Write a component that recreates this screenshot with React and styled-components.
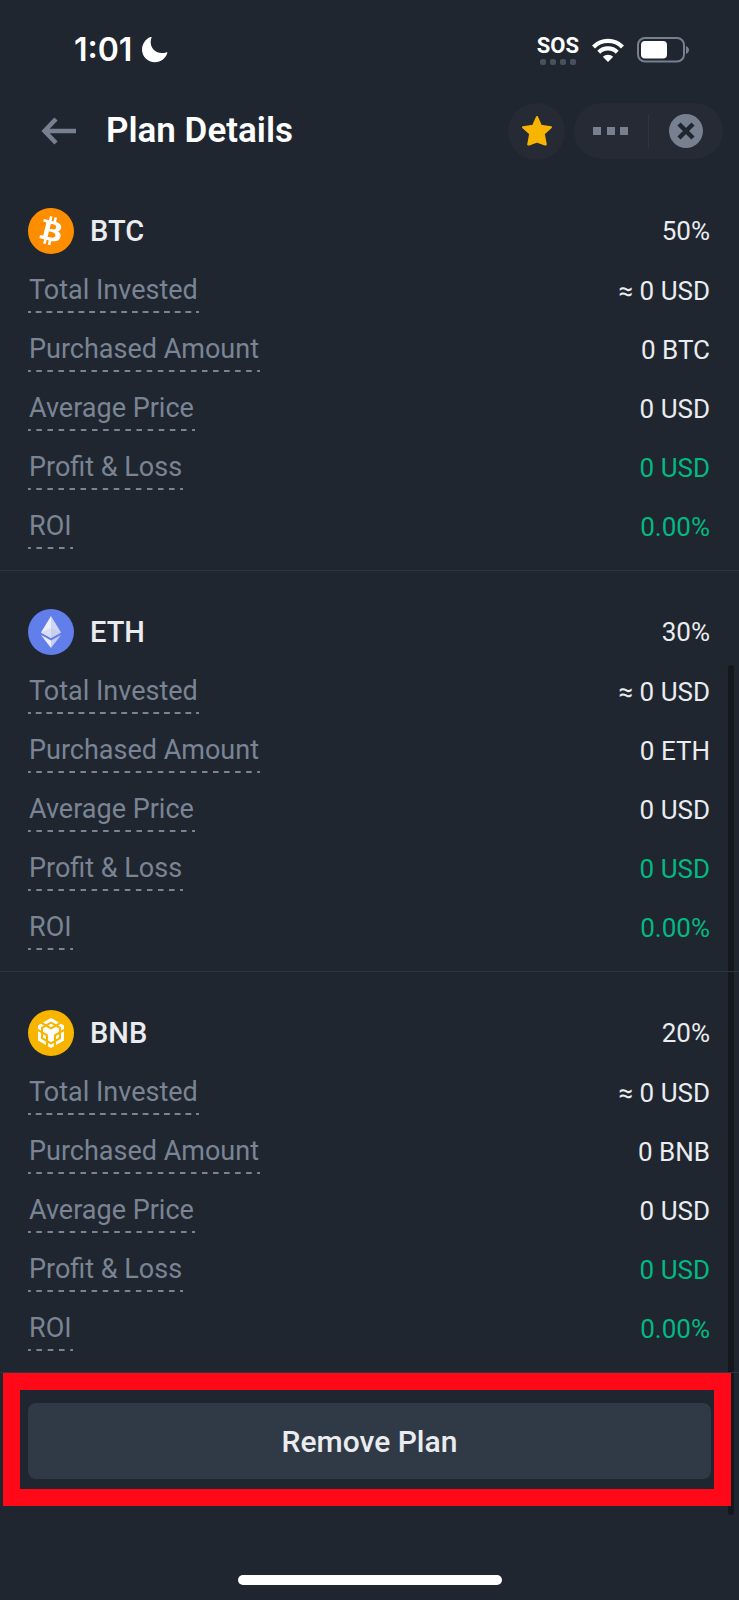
import styled, { createGlobalStyle } from 'styled-components'
import { SiBitcoin } from 'react-icons/si'

const colors = {
  background: '#1f2630',
  pill: '#252a35',
  line: '#2b3641',
  button: '#2f3a46',
  text: '#eaecef',
  label: '#7a8493',
  icon: '#76808f',
  green: '#03b982',
  yellow: '#f8b500',
  highlight: '#ff0818',
}

const GlobalStyle = createGlobalStyle`
  *, *::before, *::after {
    box-sizing: border-box;
  }

  body {
    margin: 0;
    background-color: ${colors.background};
    color: ${colors.text};
    font-family: Roboto, 'Noto Sans', sans-serif;
  }
`

const Screen = styled.div`
  position: relative;
  display: flex;
  flex-direction: column;
  min-height: 100vh;
`

const StatusBar = styled.div`
  display: flex;
  justify-content: space-between;
  align-items: center;
  height: 98px;
  padding: 2px 50px 0 74px;
  color: #ffffff;
`

const StatusGroup = styled.div`
  display: flex;
  align-items: center;
  gap: ${({ $gap }) => $gap};
`

const Time = styled.span`
  font-family: Inter, sans-serif;
  font-size: 32px;
  line-height: 40px;
  font-weight: 600;
`

const Signal = styled.div`
  display: flex;
  flex-direction: column;
  align-items: center;
  gap: 2px;
  font-size: 22px;
  line-height: 22px;
  font-weight: 700;
`

const SignalDots = styled.div`
  display: flex;
  gap: 4px;

  i {
    width: 6px;
    height: 6px;
    border-radius: 2px;
    background-color: #4a515c;
  }
`

const Header = styled.header`
  display: flex;
  align-items: center;
  gap: 9px;
  height: 66px;
  margin-bottom: 6px;
  padding: 0 16px 0 41px;
`

const IconButton = styled.button`
  display: flex;
  align-items: center;
  justify-content: center;
  border: 0;
  padding: 0;
  background: none;
  cursor: pointer;
`

const Title = styled.h1`
  flex: 1;
  margin: 0 0 0 20px;
  color: #ffffff;
  font-size: 35px;
  line-height: 40px;
  font-weight: 600;
`

const FavoriteButton = styled(IconButton)`
  width: 57px;
  height: 57px;
  border-radius: 50%;
  background-color: ${colors.pill};
`

const Capsule = styled.div`
  display: flex;
  align-items: center;
  width: 149px;
  height: 56px;
  border-radius: 28px;
  background-color: ${colors.pill};

  ${IconButton} {
    flex: 1;
    height: 34px;
  }

  ${IconButton} + ${IconButton} {
    border-left: 1px solid ${colors.line};
  }
`

const Section = styled.section`
  padding: 38px 29px 21px 28px;
  border-bottom: 1px solid ${colors.line};
`

const CoinHeader = styled.div`
  display: flex;
  align-items: center;
  gap: 16px;
  height: 46px;
  margin-bottom: 20px;
`

const CoinName = styled.h2`
  flex: 1;
  margin: 0;
  font-size: 29px;
  line-height: 34px;
  font-weight: 500;
`

const Value = styled.span`
  font-size: 26px;
  line-height: 34px;
  color: ${({ $positive }) => ($positive ? colors.green : colors.text)};
`

const Rows = styled.dl`
  display: grid;
  gap: 20px;
  margin: 0;
`

const Row = styled.div`
  display: flex;
  justify-content: space-between;
  align-items: flex-start;
  height: 39px;

  dd {
    margin: 0;
  }
`

const Label = styled.dt`
  padding: 0 1px 7px;
  color: ${colors.label};
  font-size: 27px;
  line-height: 32px;
  background: linear-gradient(
      90deg,
      ${colors.label} 3px,
      transparent 3px 8px,
      ${colors.label} 8px
    )
    left bottom / 11px 2px;
  background-repeat: round no-repeat;
`

const Footer = styled.footer`
  margin: 0 8px 0 3px;
  padding: 13px 3px 10px 8px;
  border: 17px solid ${colors.highlight};
`

const RemoveButton = styled.button`
  display: block;
  width: 100%;
  height: 76px;
  border: 0;
  border-radius: 8px;
  background-color: ${colors.button};
  color: ${colors.text};
  font-family: inherit;
  font-size: 30px;
  font-weight: 500;
  cursor: pointer;
`

const HomeIndicator = styled.div`
  width: 264px;
  height: 10px;
  margin: auto auto 15px;
  border-radius: 5px;
  background-color: #ffffff;
`

const ScrollThumb = styled.div`
  position: absolute;
  z-index: -1;
  top: 665px;
  right: 5px;
  bottom: 85px;
  width: 6px;
  border-radius: 3px;
  background-color: #14181d;
`

const BitcoinBadge = styled.span`
  display: flex;
  border-radius: 50%;
  color: #ff8d00;
  background: radial-gradient(circle closest-side, #ffffff 80%, transparent 80%);
`

function BtcIcon() {
  return (
    <BitcoinBadge>
      <SiBitcoin size={46} aria-hidden="true" />
    </BitcoinBadge>
  )
}

function EthIcon() {
  return (
    <svg width="46" height="46" viewBox="0 0 46 46" aria-hidden="true">
      <circle cx="23" cy="23" r="23" fill="#627eea" />
      <path d="M23 7 13 23.5l10 5.5z" fill="#eceffa" />
      <path d="m23 7 10 16.5-10 5.5z" fill="#cfd6f3" />
      <path d="m13 23.5 10-4.5v10z" fill="#d8def7" />
      <path d="m33 23.5-10-4.5v10z" fill="#c8cfe8" />
      <path d="m13 26 10 5.5V39z" fill="#eceffa" />
      <path d="m33 26-10 5.5V39z" fill="#c4cff5" />
    </svg>
  )
}

function BnbIcon() {
  return (
    <svg width="46" height="46" viewBox="0 0 46 46" aria-hidden="true">
      <circle cx="23" cy="23" r="23" fill={colors.yellow} />
      <path
        transform="translate(8 8) scale(1.25)"
        fill="#fff"
        d="M5.631 3.676 12.001 0l6.367 3.676-2.34 1.358L12 2.716 7.972 5.034l-2.34-1.358Zm12.737 4.636-2.34-1.358L12 9.272 7.972 6.954l-2.34 1.358v2.716l4.026 2.318v4.636L12 19.341l2.341-1.359v-4.636l4.027-2.318V8.312Zm0 7.352v-2.716l-2.34 1.358v2.716l2.34-1.358Zm1.663.96-4.027 2.318v2.717l6.368-3.677V10.63l-2.34 1.358v4.636Zm-2.34-10.63 2.34 1.358v2.716l2.341-1.358V5.994l-2.34-1.358-2.342 1.358ZM9.658 19.925v2.716L12 24l2.341-1.359v-2.716L12 21.284l-2.342-1.359Zm-4.026-4.261 2.34 1.358v-2.716l-2.34-1.358v2.716ZM9.658 5.994 12 7.352l2.341-1.358L12 4.636 9.658 5.994Zm-5.69 1.358 2.34-1.358-2.34-1.358-2.342 1.358V8.71l2.341 1.358V7.352Zm0 4.636-2.34-1.358v7.353l6.367 3.676v-2.717l-4.026-2.318v-4.636Z"
      />
    </svg>
  )
}

function MoonIcon() {
  return (
    <svg width="26" height="26" viewBox="0 0 26 26" aria-hidden="true">
      <path
        d="M9.6.6C8.9 2.2 8.6 3.9 8.7 5.6c.3 6 4.9 10.5 11 10.5 1.800 0 3.300-.3 4.800-.9.7-.2 1.100.2.9.8C23.500 21.500 18.700 25.200 13 25.200 5.700 25.200 0 19.600 0 12.500 0 7.200 3.500 2 8.600.1c.7-.2 1.200 0 1 .5z"
        fill="currentColor"
      />
    </svg>
  )
}

function WifiIcon() {
  return (
    <svg width="32" height="24" viewBox="0 0 32 24" aria-hidden="true">
      <g fill="none" stroke="currentColor" strokeWidth="4.2">
        <path d="M1.500 8.900a20.500 20.500 0 0 1 29 0" />
        <path d="M6.800 14.200a13 13 0 0 1 18.400 0" />
      </g>
      <path
        d="M16 24l-5.200-5.200a7.400 7.400 0 0 1 10.400 0z"
        fill="currentColor"
      />
    </svg>
  )
}

function BatteryIcon() {
  return (
    <svg width="52" height="26" viewBox="0 0 52 26" aria-hidden="true">
      <rect
        x="1"
        y="1"
        width="46"
        height="23.5"
        rx="7"
        fill="none"
        stroke={colors.icon}
        strokeWidth="2"
      />
      <rect x="4" y="4" width="26" height="17.5" rx="4" fill="currentColor" />
      <path d="M49 9c4 1.5 4 6.500 0 8z" fill={colors.icon} />
    </svg>
  )
}

function ArrowIcon() {
  return (
    <svg width="36" height="28" viewBox="0 0 36 28" aria-hidden="true">
      <path
        d="M35 14H4M15 2 3.500 14 15 26"
        fill="none"
        stroke={colors.icon}
        strokeWidth="4.5"
      />
    </svg>
  )
}

function StarIcon() {
  return (
    <svg width="32" height="32" viewBox="0 0 32 32" aria-hidden="true">
      <path
        d="m16 2 4 8.800 10 1.400-7.200 6.600 2 10.700H24L16 26.500l-8 3H7.200l2-10.700L2 12.200l10-1.400z"
        fill={colors.yellow}
        stroke={colors.yellow}
        strokeWidth="2"
        strokeLinejoin="round"
      />
    </svg>
  )
}

function DotsIcon() {
  return (
    <svg width="36" height="8" viewBox="0 0 36 8" aria-hidden="true">
      <path d="M0 0h8v8H0zM14 0h8v8h-8zM27 0h8v8h-8z" fill={colors.icon} />
    </svg>
  )
}

function CloseIcon() {
  return (
    <svg width="34" height="34" viewBox="0 0 34 34" aria-hidden="true">
      <circle cx="17" cy="17" r="17" fill={colors.icon} />
      <path
        d="m10 10 14 14M24 10 10 24"
        stroke={colors.background}
        strokeWidth="4.5"
      />
    </svg>
  )
}

const coins = [
  { symbol: 'BTC', share: '50%', Icon: BtcIcon },
  { symbol: 'ETH', share: '30%', Icon: EthIcon },
  { symbol: 'BNB', share: '20%', Icon: BnbIcon },
]

function Stat({ label, positive, children }) {
  return (
    <Row>
      <Label>{label}</Label>
      <Value as="dd" $positive={positive}>
        {children}
      </Value>
    </Row>
  )
}

function Coin({ symbol, share, Icon }) {
  return (
    <Section>
      <CoinHeader>
        <Icon />
        <CoinName>{symbol}</CoinName>
        <Value>{share}</Value>
      </CoinHeader>
      <Rows>
        <Stat label="Total Invested">≈ 0 USD</Stat>
        <Stat label="Purchased Amount">0 {symbol}</Stat>
        <Stat label="Average Price">0 USD</Stat>
        <Stat label="Profit &amp; Loss" positive>
          0 USD
        </Stat>
        <Stat label="ROI" positive>
          0.00%
        </Stat>
      </Rows>
    </Section>
  )
}

export default function App() {
  return (
    <Screen>
      <GlobalStyle />
      <StatusBar>
        <StatusGroup $gap="10px">
          <Time>1:01</Time>
          <MoonIcon />
        </StatusGroup>
        <StatusGroup $gap="13px">
          <Signal>
            SOS
            <SignalDots>
              <i />
              <i />
              <i />
              <i />
            </SignalDots>
          </Signal>
          <WifiIcon />
          <BatteryIcon />
        </StatusGroup>
      </StatusBar>
      <Header>
        <IconButton type="button" aria-label="Back">
          <ArrowIcon />
        </IconButton>
        <Title>Plan Details</Title>
        <FavoriteButton type="button" aria-label="Favorite">
          <StarIcon />
        </FavoriteButton>
        <Capsule>
          <IconButton type="button" aria-label="More">
            <DotsIcon />
          </IconButton>
          <IconButton type="button" aria-label="Close">
            <CloseIcon />
          </IconButton>
        </Capsule>
      </Header>
      <main>
        {coins.map((coin) => (
          <Coin key={coin.symbol} {...coin} />
        ))}
      </main>
      <Footer>
        <RemoveButton type="button">Remove Plan</RemoveButton>
      </Footer>
      <HomeIndicator />
      <ScrollThumb />
    </Screen>
  )
}
